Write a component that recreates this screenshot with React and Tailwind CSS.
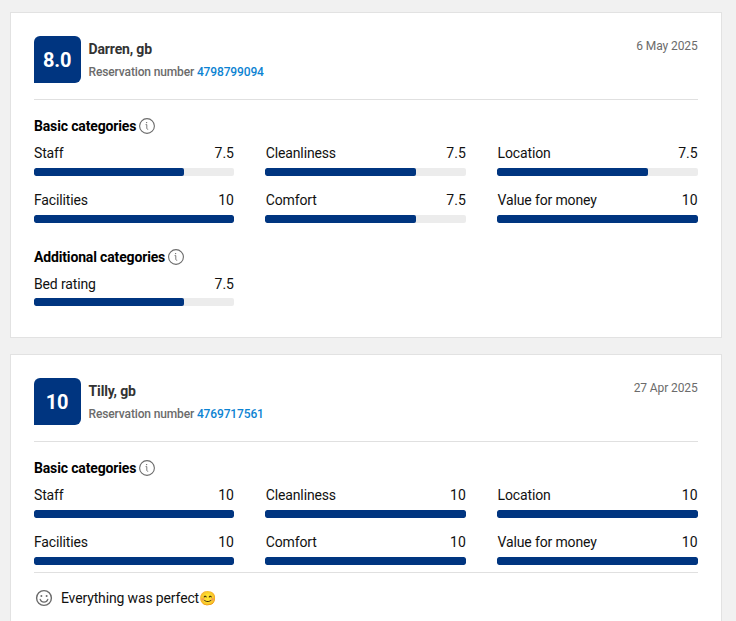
import React from 'react';

const reviews = [
  {
    score: '8.0',
    guest: 'Darren, gb',
    reservation: '4798799094',
    date: '6 May 2025',
    basic: [
      { label: 'Staff', value: 7.5 },
      { label: 'Cleanliness', value: 7.5 },
      { label: 'Location', value: 7.5 },
      { label: 'Facilities', value: 10 },
      { label: 'Comfort', value: 7.5 },
      { label: 'Value for money', value: 10 },
    ],
    additional: [{ label: 'Bed rating', value: 7.5 }],
  },
  {
    score: '10',
    guest: 'Tilly, gb',
    reservation: '4769717561',
    date: '27 Apr 2025',
    basic: [
      { label: 'Staff', value: 10 },
      { label: 'Cleanliness', value: 10 },
      { label: 'Location', value: 10 },
      { label: 'Facilities', value: 10 },
      { label: 'Comfort', value: 10 },
      { label: 'Value for money', value: 10 },
    ],
    comment: 'Everything was perfect😊',
  },
];

const InfoIcon = () => (
  <svg viewBox="0 0 16 16" className="h-4 w-4 shrink-0" fill="none" stroke="#6b6b6b">
    <circle cx="8" cy="8" r="7.4" strokeWidth="1.1" />
    <path d="M6.6 6.6h1.2v3.7c0 .7.4 1 1.4 1" strokeWidth="0.9" />
    <circle cx="7.6" cy="4.6" r="0.7" fill="#6b6b6b" stroke="none" />
  </svg>
);

const SmileIcon = () => (
  <svg viewBox="0 0 18 18" className="h-[18px] w-[18px] shrink-0" fill="none" stroke="#6b6b6b">
    <circle cx="9" cy="9" r="7.4" strokeWidth="1.4" />
    <path d="M5.2 10.4c.6 1.8 2 2.8 3.8 2.8s3.2-1 3.8-2.8" strokeWidth="1.3" strokeLinecap="round" />
    <circle cx="6.4" cy="6.9" r="1" fill="#6b6b6b" stroke="none" />
    <circle cx="11.6" cy="6.9" r="1" fill="#6b6b6b" stroke="none" />
  </svg>
);

const Heading = ({ children }) => (
  <div className="flex h-5 items-center gap-[3px] pl-[0.4px]">
    <h3 className="text-sm leading-5 font-bold tracking-[-0.15px] text-black">{children}</h3>
    <InfoIcon />
  </div>
);

const Ratings = ({ items, barGap = 'mt-[5px]' }) => (
  <div className="grid grid-cols-3 gap-x-[31px] gap-y-[14px]">
    {items.map(({ label, value }) => (
      <div key={label}>
        <div className="flex justify-between px-[0.4px] text-sm leading-5 text-[#111]">
          <span className="tracking-[-0.14px]">{label}</span>
          <span>{value}</span>
        </div>
        <div className={`${barGap} h-2 overflow-hidden rounded-[2px] bg-[#ececec]`}>
          <div className="h-full rounded-[2px] bg-[#003580]" style={{ width: `${value * 10}%` }} />
        </div>
      </div>
    ))}
  </div>
);

const ReviewCard = ({ review }) => (
  <div className="border border-[#e2e2e2] bg-white pt-[23px] pr-[23px] pb-[31px] pl-[22.6px]">
    {/* Header */}
    <div className="flex border-b border-[#e0e0e0] pb-4">
      <div className="flex h-[47px] w-[47px] items-center justify-center rounded-[6px] rounded-bl-none bg-[#003580] text-xl font-bold tracking-[-0.2px] text-white">
        {review.score}
      </div>
      <div className="ml-2">
        <div className="mt-[3px] text-sm leading-5 font-bold tracking-[-0.16px] text-[#333]">{review.guest}</div>
        <div className="mt-[5px] text-xs leading-4 font-medium tracking-[-0.14px] text-[#6b6b6b]">
          Reservation number <a className="text-[#0c83d2]">{review.reservation}</a>
        </div>
      </div>
      <div className="mt-[2px] ml-auto pr-[0.4px] text-xs leading-4 tracking-[-0.1px] text-[#6b6b6b]">{review.date}</div>
    </div>

    {/* Scores */}
    <div className="mt-4">
      <Heading>Basic categories</Heading>
      <div className="mt-[7px]">
        <Ratings items={review.basic} />
      </div>
    </div>
    {review.additional && (
      <div className="mt-6">
        <Heading>Additional categories</Heading>
        <div className="mt-[7px]">
          <Ratings items={review.additional} barGap="mt-1" />
        </div>
      </div>
    )}

    {/* Guest comment */}
    {review.comment && (
      <div className="mt-[7px] flex items-center gap-2 border-t border-[#e0e0e0] pt-[15px]">
        <div className="ml-px">
          <SmileIcon />
        </div>
        <p className="pl-[0.4px] text-sm leading-5 tracking-[-0.14px] text-[#111]">{review.comment}</p>
      </div>
    )}
  </div>
);

const App = () => (
  <div className="flex h-[621px] flex-col gap-4 overflow-hidden bg-[#f1f1f1] pt-3 pr-[14px] pl-[10px] font-[Roboto,sans-serif]">
    {reviews.map((review) => (
      <ReviewCard key={review.reservation} review={review} />
    ))}
  </div>
);

export default App;
